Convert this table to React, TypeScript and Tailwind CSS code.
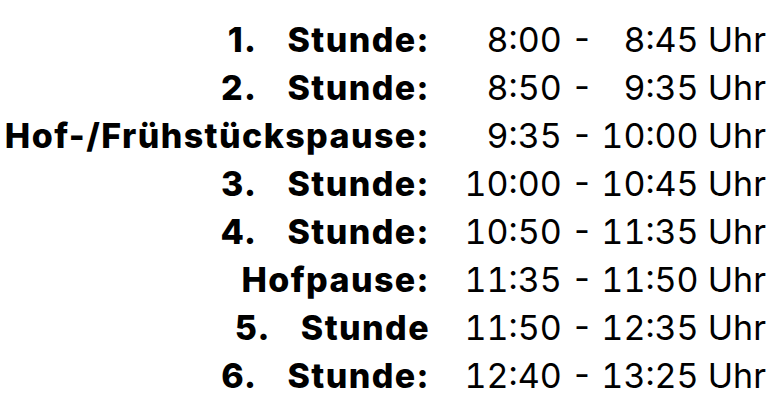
import React from "react";

type Row = { num?: string; label: string; start: string; end: string };

const rows: Row[] = [
  { num: "1.", label: "Stunde:", start: "8:00 -", end: "8:45 Uhr" },
  { num: "2.", label: "Stunde:", start: "8:50 -", end: "9:35 Uhr" },
  { label: "Hof-/Frühstückspause:", start: "9:35 -", end: "10:00 Uhr" },
  { num: "3.", label: "Stunde:", start: "10:00 -", end: "10:45 Uhr" },
  { num: "4.", label: "Stunde:", start: "10:50 -", end: "11:35 Uhr" },
  { label: "Hofpause:", start: "11:35 -", end: "11:50 Uhr" },
  { num: "5.", label: "Stunde", start: "11:50 -", end: "12:35 Uhr" },
  { num: "6.", label: "Stunde:", start: "12:40 -", end: "13:25 Uhr" },
];

export default function App() {
  return (
    <div
      className="w-[776px] h-[403px] bg-white text-black overflow-hidden pt-[16px]"
      style={{ fontFamily: "Inter, 'Noto Sans', sans-serif" }}
    >
      <div className="grid grid-cols-[430px_163px_173px] text-[34px] leading-[48px]">
        {rows.map((r, i) => (
          <React.Fragment key={i}>
            <div className="text-right font-extrabold tracking-[1.4px] whitespace-nowrap">
              {r.num && <span className="mr-[30px]">{r.num}</span>}
              <span>{r.label}</span>
            </div>
            <div className="text-right whitespace-nowrap tabular-nums">{r.start}</div>
            <div className="text-right whitespace-nowrap tabular-nums">{r.end}</div>
          </React.Fragment>
        ))}
      </div>
    </div>
  );
}
